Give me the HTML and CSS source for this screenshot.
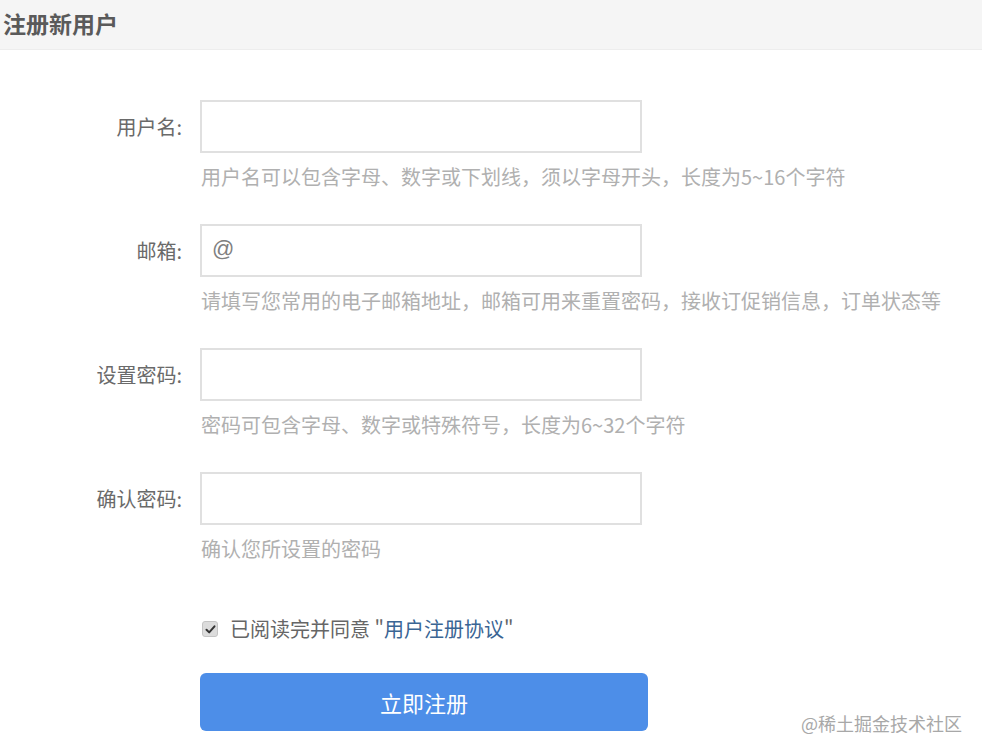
FILE: index.html
```html
<!DOCTYPE html>
<html lang="zh-CN">
<head>
<meta charset="utf-8">
<title>注册新用户</title>
<link rel="stylesheet" href="styles.css">
</head>
<body>
<div class="page">
  <header class="header">
    <h1 class="title">注册新用户</h1>
  </header>
  <form class="form">
    <div class="field">
      <label class="label">用户名:</label>
      <div class="control">
        <div class="input"></div>
        <p class="hint">用户名可以包含字母、数字或下划线，须以字母开头，长度为5~16个字符</p>
      </div>
    </div>
    <div class="field">
      <label class="label">邮箱:</label>
      <div class="control">
        <div class="input"><span class="at">@</span></div>
        <p class="hint">请填写您常用的电子邮箱地址，邮箱可用来重置密码，接收订促销信息，订单状态等</p>
      </div>
    </div>
    <div class="field">
      <label class="label">设置密码:</label>
      <div class="control">
        <div class="input"></div>
        <p class="hint">密码可包含字母、数字或特殊符号，长度为6~32个字符</p>
      </div>
    </div>
    <div class="field">
      <label class="label">确认密码:</label>
      <div class="control">
        <div class="input"></div>
        <p class="hint">确认您所设置的密码</p>
      </div>
    </div>
    <div class="agree">
      <span class="check"><svg width="11" height="11" viewBox="0 0 11 11"><path d="M1.5 5.8 L4.2 8.4 L9.5 2.3" fill="none" stroke="#333" stroke-width="2" stroke-linecap="round" stroke-linejoin="round"/></svg></span>
      <span class="agree-text">已阅读完并同意 "<span class="link">用户注册协议</span>"</span>
    </div>
    <div class="submit-row">
      <button type="button" class="submit">立即注册</button>
    </div>
  </form>
  <div class="watermark">@稀土掘金技术社区</div>
</div>
</body>
</html>
```
FILE: styles.css
```css
* { box-sizing: border-box; }
html, body {
  margin: 0;
  padding: 0;
  background: #fff;
}
body {
  font-family: "Noto Sans CJK SC", "Liberation Sans", sans-serif;
  width: 982px;
  height: 756px;
  overflow: hidden;
}
.page {
  position: relative;
  height: 756px;
}
.header {
  height: 50px;
  background: #f5f5f5;
  border-bottom: 1px solid #ededed;
  display: flex;
  align-items: center;
  padding-left: 3px;
}
.title {
  margin: 0;
  font-size: 23px;
  font-weight: bold;
  color: #5a5a5a;
  line-height: 30px;
  margin-top: -3px;
}
.form {
  padding-top: 50px;
  display: flex;
  flex-direction: column;
}
.field {
  display: flex;
  align-items: flex-start;
  height: 124px;
}
.label {
  width: 184px;
  text-align: right;
  font-size: 20px;
  line-height: 53px;
  height: 53px;
  color: #6a6a6a;
  padding-right: 2px;
}
.control {
  margin-left: 16px;
}
.input {
  width: 442px;
  height: 53px;
  border: 2px solid #e0e0e0;
  background: #fff;
  display: flex;
  align-items: center;
  padding-left: 10px;
}
.at {
  font-family: "Liberation Sans", sans-serif;
  font-size: 22px;
  color: #808080;
  margin-top: -4px;
}
.hint {
  margin: 13px 0 0 1px;
  font-size: 20px;
  line-height: 22px;
  color: #b0b0b0;
  white-space: nowrap;
}
.agree {
  margin-top: 22px;
  margin-left: 202px;
  display: flex;
  align-items: center;
  height: 22px;
}
.check {
  width: 16px;
  height: 16px;
  border-radius: 3px;
  background: #dcdcdc;
  border: 1px solid #c4c4c4;
  display: flex;
  align-items: center;
  justify-content: center;
}
.agree-text {
  margin-left: 12px;
  font-size: 20px;
  line-height: 22px;
  color: #666;
}
.link {
  color: #3a6594;
}
.submit-row {
  margin-top: 33px;
  margin-left: 200px;
}
.submit {
  width: 448px;
  height: 58px;
  border: none;
  border-radius: 6px;
  background: #4d8ee8;
  color: #fff;
  font-family: "Noto Sans CJK SC", sans-serif;
  font-size: 22px;
  line-height: 58px;
  padding: 0;
}
.watermark {
  position: absolute;
  right: 20px;
  bottom: 22px;
  font-size: 18px;
  line-height: 22px;
  color: #a8a8a8;
}
```
